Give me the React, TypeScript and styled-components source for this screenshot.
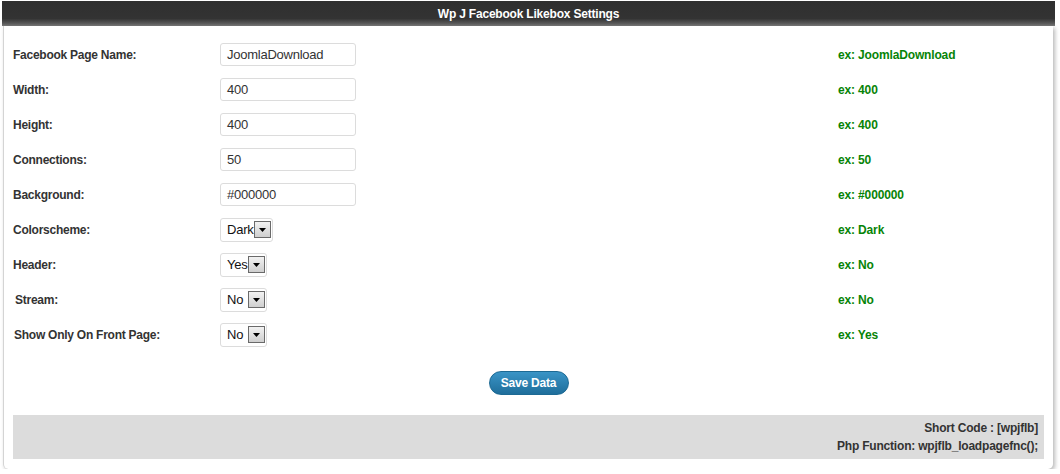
import React from "react";
import styled, { createGlobalStyle } from "styled-components";

const Global = createGlobalStyle`
  html, body { margin: 0; padding: 0; background: #fff; }
  body { font-family: "Liberation Sans", Arial, sans-serif; font-size: 12px; color: #333; }
`;

const Page = styled.div`
  width: 1053px;
  padding: 1px 0 0 2px;
`;

const Header = styled.div`
  height: 25px;
  background: linear-gradient(#2f2f2f 0%, #333 70%, #555 88%, #7a7a7a 100%);
  color: #fff;
  font-weight: bold;
  font-size: 12px;
  letter-spacing: -0.2px;
  display: flex;
  align-items: center;
  justify-content: center;
`;

const Panel = styled.div`
  margin: 0 2px 0 1px;
  background: #fff;
  border-left: 1px solid #d4d4d4;
  border-radius: 0 0 5px 5px;
  box-shadow: 2px 2px 4px rgba(0, 0, 0, 0.28);
  padding: 11px 9px 10px 9px;
`;

const Form = styled.div`
  display: grid;
  grid-template-columns: 207px 618px 1fr;
  grid-auto-rows: 35px;
  align-items: center;
`;

const Label = styled.div<{ $indent?: number }>`
  font-weight: bold;
  color: #333;
  letter-spacing: -0.25px;
  padding-left: ${(p) => p.$indent ?? 0}px;
`;

const TextInput = styled.div`
  width: 136px;
  height: 23px;
  box-sizing: border-box;
  border: 1px solid #dcdcdc;
  border-radius: 3px;
  padding: 0 6px;
  display: flex;
  align-items: center;
  font-size: 13px;
  letter-spacing: -0.25px;
  color: #333;
`;

const SelectBox = styled.div<{ $w: number }>`
  width: ${(p) => p.$w}px;
  height: 24px;
  box-sizing: border-box;
  border: 1px solid #dcdcdc;
  border-radius: 3px;
  padding: 0 1px 0 6px;
  display: flex;
  align-items: center;
  justify-content: space-between;
  font-size: 13px;
  letter-spacing: -0.2px;
  color: #111;
`;

const DropBtn = styled.div`
  width: 17px;
  height: 17px;
  box-sizing: border-box;
  border: 1px solid #6a6a6a;
  background: linear-gradient(#f2f2f2, #cfcfcf);
  display: flex;
  align-items: center;
  justify-content: center;
`;

const Example = styled.div`
  font-weight: bold;
  letter-spacing: -0.15px;
  color: #078407;
`;

const Actions = styled.div`
  display: flex;
  justify-content: center;
  margin-top: 19px;
`;

const SaveButton = styled.button`
  width: 80px;
  height: 24px;
  border: 1px solid #1d6a94;
  border-radius: 12px;
  background: linear-gradient(#3a94c6, #1f6e9b);
  color: #fff;
  font-family: "Liberation Sans", Arial, sans-serif;
  font-weight: bold;
  font-size: 12px;
  letter-spacing: -0.2px;
  padding: 0;
  cursor: pointer;
`;

const Footer = styled.div`
  margin-top: 20px;
  background: #dcdcdc;
  padding: 4px 6px;
  text-align: right;
  font-weight: bold;
  letter-spacing: -0.2px;
  line-height: 18px;
  color: #333;
`;

const Arrow = () => (
  <svg width="7" height="4" viewBox="0 0 7 4">
    <polygon points="0,0 7,0 3.5,4" fill="#000" />
  </svg>
);

type Row =
  | { label: string; kind: "text"; value: string; ex: string; indent?: number }
  | { label: string; kind: "select"; value: string; w: number; ex: string; indent?: number };

const rows: Row[] = [
  { label: "Facebook Page Name:", kind: "text", value: "JoomlaDownload", ex: "ex: JoomlaDownload" },
  { label: "Width:", kind: "text", value: "400", ex: "ex: 400" },
  { label: "Height:", kind: "text", value: "400", ex: "ex: 400" },
  { label: "Connections:", kind: "text", value: "50", ex: "ex: 50" },
  { label: "Background:", kind: "text", value: "#000000", ex: "ex: #000000" },
  { label: "Colorscheme:", kind: "select", value: "Dark", w: 53, ex: "ex: Dark" },
  { label: "Header:", kind: "select", value: "Yes", w: 47, ex: "ex: No" },
  { label: "Stream:", kind: "select", value: "No", w: 47, ex: "ex: No", indent: 2 },
  { label: "Show Only On Front Page:", kind: "select", value: "No", w: 47, ex: "ex: Yes", indent: 1 },
];

export default function App() {
  return (
    <>
      <Global />
      <Page>
        <Header>Wp J Facebook Likebox Settings</Header>
        <Panel>
          <Form>
            {rows.map((r) => (
              <React.Fragment key={r.label}>
                <Label $indent={r.indent}>{r.label}</Label>
                <div>
                  {r.kind === "text" ? (
                    <TextInput>{r.value}</TextInput>
                  ) : (
                    <SelectBox $w={r.w}>
                      <span>{r.value}</span>
                      <DropBtn>
                        <Arrow />
                      </DropBtn>
                    </SelectBox>
                  )}
                </div>
                <Example>{r.ex}</Example>
              </React.Fragment>
            ))}
          </Form>
          <Actions>
            <SaveButton>Save Data</SaveButton>
          </Actions>
          <Footer>
            Short Code : [wpjflb]
            <br />
            Php Function: wpjflb_loadpagefnc();
          </Footer>
        </Panel>
      </Page>
    </>
  );
}
